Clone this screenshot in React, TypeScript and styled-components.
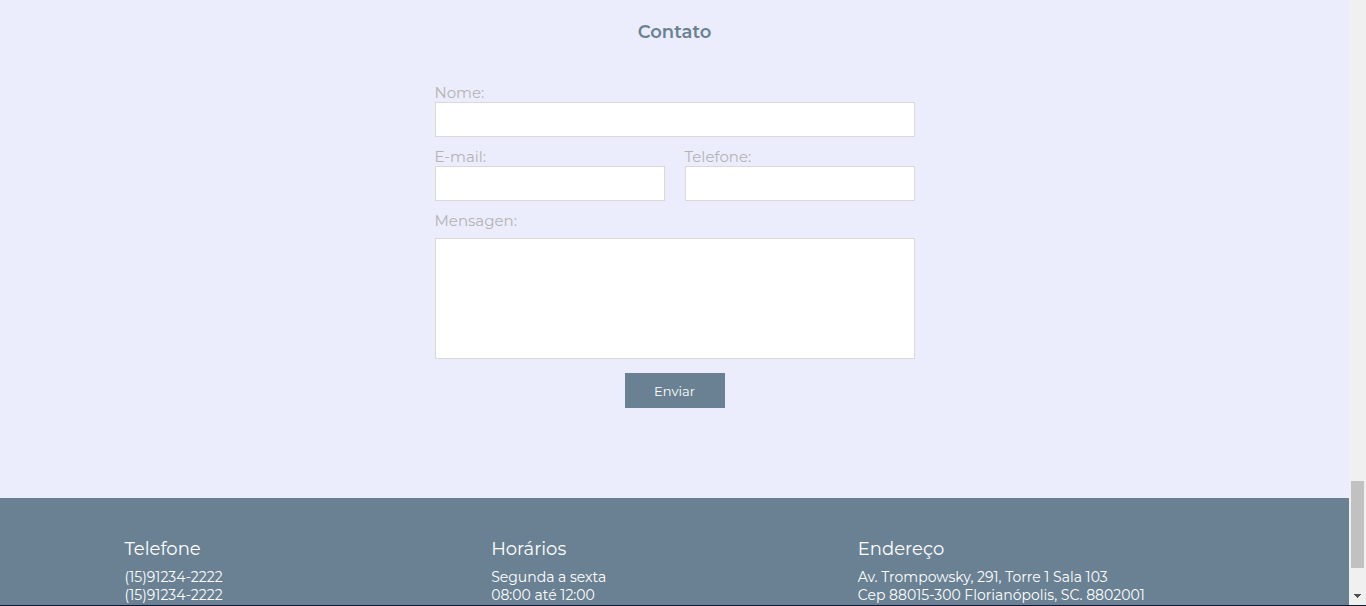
import React from "react";
import styled, { createGlobalStyle } from "styled-components";

const GlobalStyle = createGlobalStyle`
  *, *::before, *::after { box-sizing: border-box; }
  body {
    margin: 0;
    background: #ebedfc;
    font-family: Montserrat, Inter, "Open Sans", sans-serif;
  }
  h2, h3, p { margin: 0; }
`;

const Shell = styled.div`
  display: grid;
  grid-template-columns: minmax(0, 1fr) 17px;
  min-height: 100vh;
  border-bottom: 1px solid #10183a;
`;

const Page = styled.div`
  display: flex;
  flex-direction: column;
`;

const ContactSection = styled.main`
  flex: 1;
  padding: 20px 20px 90px;
  background: #ebedfc;
`;

const SectionTitle = styled.h2`
  color: #698193;
  font-size: 18px;
  font-weight: 600;
  line-height: 24px;
  text-align: center;
`;

const Form = styled.form`
  display: grid;
  grid-template-columns: 1fr 1fr;
  gap: 10px 20px;
  max-width: 480px;
  margin: 39px auto 0;
`;

const Field = styled.div<{ $wide?: boolean; $gap?: number }>`
  display: flex;
  flex-direction: column;
  gap: ${({ $gap = 0 }) => $gap}px;
  grid-column: ${({ $wide }) => ($wide ? "1 / -1" : "auto")};
`;

const Label = styled.label`
  color: #b3b3b3;
  font-size: 15px;
  line-height: 19px;
`;

const Input = styled.input`
  width: 100%;
  height: 35px;
  padding: 0 10px;
  border: 1px solid #d9d9d9;
  border-radius: 0;
  background: #fff;
  font: inherit;
`;

const TextArea = styled.textarea`
  display: block;
  width: 100%;
  height: 121px;
  padding: 10px;
  border: 1px solid #d9d9d9;
  border-radius: 0;
  background: #fff;
  font: inherit;
  resize: none;
`;

const SubmitButton = styled.button`
  grid-column: 1 / -1;
  justify-self: center;
  width: 100px;
  height: 35px;
  margin-top: 4px;
  padding: 0;
  border: 0;
  background: #698193;
  color: #fff;
  font-family: inherit;
  font-size: 13px;
  cursor: pointer;
`;

const Footer = styled.footer`
  padding: 40px 20px 1px;
  background: #698193;
  color: #fff;
`;

const FooterColumns = styled.div`
  display: grid;
  grid-template-columns: repeat(3, 1fr);
  max-width: 1100px;
  margin: 0 auto;
`;

const FooterTitle = styled.h3`
  margin-bottom: 8px;
  font-size: 18px;
  font-weight: 400;
  line-height: 22px;
`;

const FooterLine = styled.p`
  font-size: 14px;
  line-height: 18px;
`;

const ScrollTrack = styled.div`
  display: flex;
  flex-direction: column;
  align-items: center;
  justify-content: flex-end;
  gap: 26px;
  padding: 0 1px 6px 0;
  background: #f0f0f0;
`;

const ScrollThumb = styled.div`
  width: 13px;
  height: 87px;
  margin-left: 1px;
  background: #c1c1c1;
`;

const columns = [
  { title: "Telefone", lines: ["(15)91234-2222", "(15)91234-2222"] },
  { title: "Horários", lines: ["Segunda a sexta", "08:00 até 12:00"] },
  {
    title: "Endereço",
    lines: [
      "Av. Trompowsky, 291, Torre 1 Sala 103",
      "Cep 88015-300 Florianópolis, SC. 8802001",
    ],
  },
];

export default function App() {
  return (
    <>
      <GlobalStyle />
      <Shell>
        <Page>
          <ContactSection>
            <SectionTitle>Contato</SectionTitle>
            <Form onSubmit={(event) => event.preventDefault()}>
              <Field $wide>
                <Label htmlFor="nome">Nome:</Label>
                <Input id="nome" type="text" />
              </Field>
              <Field>
                <Label htmlFor="email">E-mail:</Label>
                <Input id="email" type="email" />
              </Field>
              <Field>
                <Label htmlFor="telefone">Telefone:</Label>
                <Input id="telefone" type="tel" />
              </Field>
              <Field $wide $gap={8}>
                <Label htmlFor="mensagem">Mensagen:</Label>
                <TextArea id="mensagem" />
              </Field>
              <SubmitButton type="submit">Enviar</SubmitButton>
            </Form>
          </ContactSection>
          <Footer>
            <FooterColumns>
              {columns.map(({ title, lines }) => (
                <div key={title}>
                  <FooterTitle>{title}</FooterTitle>
                  {lines.map((line, index) => (
                    <FooterLine key={index}>{line}</FooterLine>
                  ))}
                </div>
              ))}
            </FooterColumns>
          </Footer>
        </Page>
        <ScrollTrack aria-hidden="true">
          <ScrollThumb />
          <svg width="7" height="5" viewBox="0 0 7 5" shapeRendering="crispEdges">
            <path d="M0 0h7v1h-1v1h-1v1h-1v1h-1v-1h-1v-1h-1v-1h-1z" fill="#505050" />
          </svg>
        </ScrollTrack>
      </Shell>
    </>
  );
}
